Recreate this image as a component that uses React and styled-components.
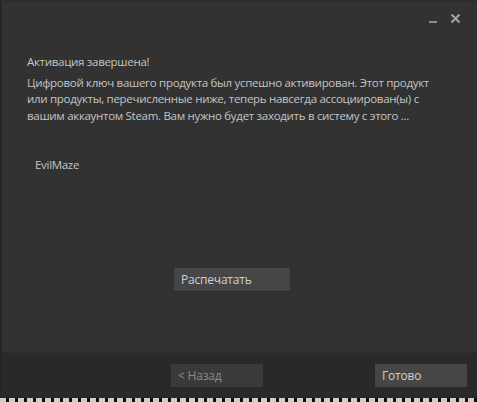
import React from "react";
import styled, { createGlobalStyle } from "styled-components";

const Global = createGlobalStyle`
  html, body { margin: 0; padding: 0; background: #0c0c0c; }
  body { font-family: "Open Sans", "Noto Sans", sans-serif; }
`;

const Window = styled.div`
  width: 477px;
  height: 398px;
  box-sizing: border-box;
  background: #323232;
  border-top: 2px solid #2b2c33;
  border-left: 2px solid #262626;
  display: flex;
  flex-direction: column;
`;

const TitleBar = styled.div`
  height: 36px;
  display: flex;
  justify-content: flex-end;
  align-items: flex-start;
  padding: 10px 16px 0 0;
  box-sizing: border-box;
  gap: 10px;
`;

const Ctrl = styled.div`
  width: 12px;
  height: 12px;
  display: flex;
  align-items: center;
  justify-content: center;
`;

const Body = styled.div`
  flex: 1;
  padding: 16px 10px 0 25px;
  color: #c4c4c4;
  font-size: 11.5px;
  line-height: 16.5px;
  letter-spacing: -0.3px;
`;

const Heading = styled.div`
  margin-bottom: 4px;
`;

const Line = styled.div`
  white-space: nowrap;
`;

const Game = styled.div`
  margin: 33px 0 0 8px;
`;

const Center = styled.div`
  display: flex;
  justify-content: center;
  margin-top: 94px;
  padding-right: 30px;
`;

const Btn = styled.button`
  height: 24px;
  width: ${(p) => p.w}px;
  border: none;
  border-bottom: 1px solid #2a2a2a;
  background: ${(p) => (p.disabled ? "#3a3a3a" : "#464646")};
  color: ${(p) => (p.disabled ? "#8a8a8a" : "#d0d0d0")};
  font-family: "Open Sans", "Noto Sans", sans-serif;
  font-size: 12px;
  letter-spacing: -0.2px;
  text-align: left;
  padding: 0 7px;
  cursor: default;
`;

const Footer = styled.div`
  height: 46px;
  background: #292929;
  display: flex;
  align-items: center;
  padding: 0 10px 0 169px;
  box-sizing: border-box;
  border-top: 1px solid #2e2e2e;
`;

const Spacer = styled.div`
  flex: 1;
`;

const Desk = styled.div`
  height: 4px;
  background: repeating-linear-gradient(90deg, #fff 0 6px, #111 6px 9px);
  opacity: 0.8;
`;

export default function App() {
  return (
    <>
      <Global />
      <Window>
        <TitleBar>
          <Ctrl>
            <svg width="9" height="12" viewBox="0 0 9 12">
              <rect x="0" y="9" width="8" height="2" fill="#8c8c8c" />
            </svg>
          </Ctrl>
          <Ctrl>
            <svg width="11" height="11" viewBox="0 0 11 11">
              <path d="M1.5 1.5 L9.5 9.5 M9.5 1.5 L1.5 9.5" stroke="#a0a0a0" strokeWidth="2.2" />
            </svg>
          </Ctrl>
        </TitleBar>
        <Body>
          <Heading>Активация завершена!</Heading>
          <Line>Цифровой ключ вашего продукта был успешно активирован. Этот продукт</Line>
          <Line>или продукты, перечисленные ниже, теперь навсегда ассоциирован(ы) с</Line>
          <Line>вашим аккаунтом Steam. Вам нужно будет заходить в систему с этого ...</Line>
          <Game>EvilMaze</Game>
          <Center>
            <Btn w={116}>Распечатать</Btn>
          </Center>
        </Body>
        <Footer>
          <Btn w={92} disabled>
            &lt; Назад
          </Btn>
          <Spacer />
          <Btn w={92}>Готово</Btn>
        </Footer>
      </Window>
      <Desk />
    </>
  );
}
